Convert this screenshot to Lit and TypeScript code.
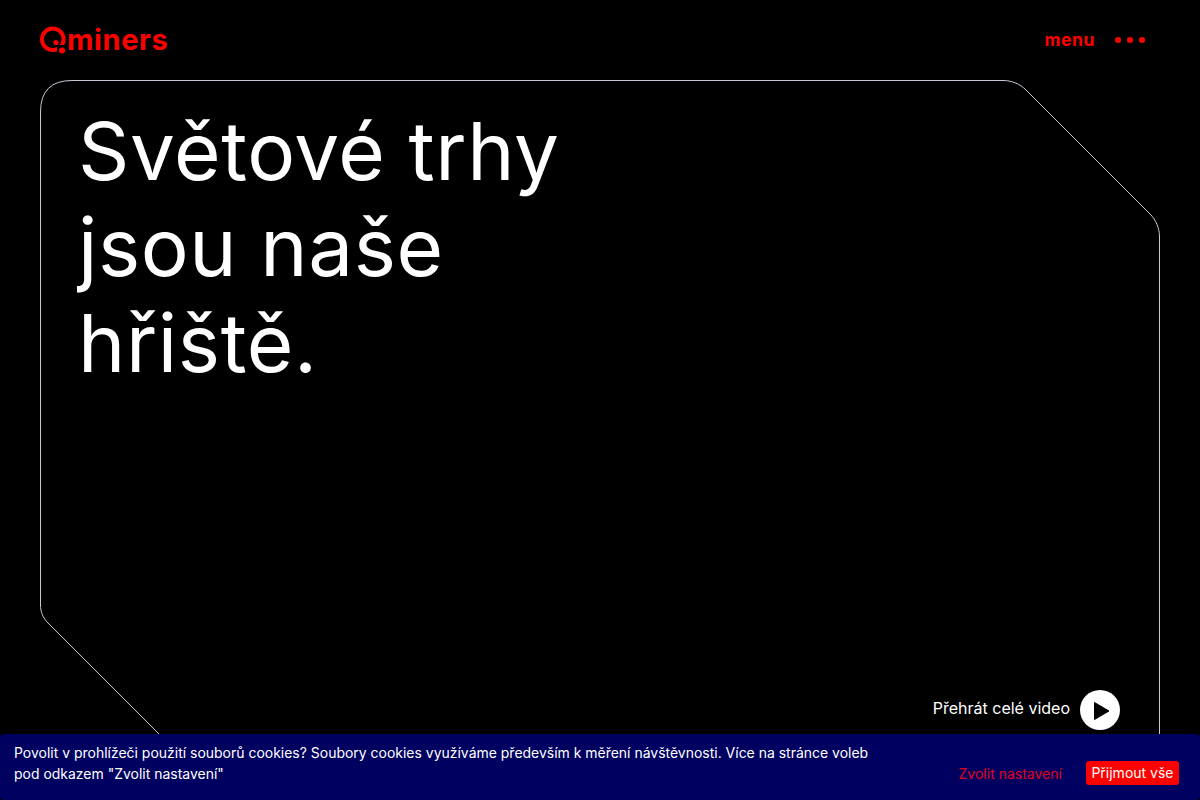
import { LitElement, html, css } from "lit";
import { customElement } from "lit/decorators.js";

@customElement("app-root")
export class AppRoot extends LitElement {
  static styles = css`
    :host { display: block; width: 1200px; height: 800px; background: #000; overflow: hidden; position: relative; font-family: Inter, "Liberation Sans", sans-serif; color: #fff; }
    .top { display: flex; align-items: center; justify-content: space-between; height: 80px; padding: 0 55px 0 40px; box-sizing: border-box; }
    .logo { display: flex; align-items: center; color: #ff0000; font-size: 29px; font-weight: 700; letter-spacing: 0.6px; line-height: 1; }
    .logo svg { display: block; width: 27px; height: 28px; }
    .logo span { padding-bottom: 2px; }
    .menu { display: flex; align-items: center; gap: 20px; color: #ff0000; font-size: 17.500px; font-weight: 700; letter-spacing: 0.6px; }
    .menu span { padding-bottom: 2px; }
    .dots { display: flex; gap: 6px; }
    .dots i { width: 6px; height: 6px; border-radius: 50%; background: #ff0000; }
    .hero { position: relative; margin: 0 40px; height: 720px; box-sizing: border-box; padding: 23px 38px 0; }
    .frame { position: absolute; left: 0; top: 0; width: 1120px; height: 720px; }
    h1 { position: relative; margin: 0; font-size: 80px; line-height: 96px; font-weight: 400; letter-spacing: 0.6px; }
    .play { position: absolute; right: 40px; top: 610px; display: flex; align-items: center; gap: 10px; font-size: 16px; }
    .play span { padding-bottom: 4px; }
    .play svg { width: 40px; height: 40px; display: block; }
    .cookies { position: absolute; left: 0; right: 0; bottom: 0; height: 66px; box-sizing: border-box; background: #000060; border-radius: 4px; display: flex; align-items: flex-end; justify-content: space-between; padding: 8px 21px 15px 14px; font-size: 13.970px; line-height: 21px; }
    .cookies p { margin: 0 0 1px; width: 900px; }
    .actions { display: flex; align-items: center; gap: 24px; font-size: 14px; }
    .set { color: #e0001b; }
    .ok { background: #ff0000; color: #fff; border-radius: 3px; padding: 1px 5.500px 2px; }
  `;
  render() {
    return html`
      <div class="top">
        <div class="logo">
          <svg viewBox="0 0 27 28"><circle cx="12.800" cy="13.300" r="10.800" fill="none" stroke="#f00" stroke-width="4"/><circle cx="16" cy="16.500" r="2.600" fill="#f00"/><rect x="17" y="19" width="10" height="9" fill="#000"/><circle cx="22" cy="24.500" r="3" fill="#f00"/></svg>
          <span>miners</span>
        </div>
        <div class="menu"><span>menu</span><div class="dots"><i></i><i></i><i></i></div></div>
      </div>
      <div class="hero">
        <svg class="frame" viewBox="0 0 1120 720" fill="none"><path d="M.5 525V32Q.5.500 32 .500H963C972 .500 980 4 986 10L1110 134C1116 140 1119.500 148 1119.500 157V720M.5 525C.5 532 3 538 8 543L185 720" stroke="#c9c9d6" stroke-width="1"/></svg>
        <h1>Světové trhy<br>jsou naše<br>hřiště.</h1>
        <div class="play"><span>Přehrát celé video</span><svg viewBox="0 0 40 40"><circle cx="20" cy="20" r="20" fill="#fff"/><path d="M14.500 12.500L29 21 14.500 29.500Z" fill="#000" stroke="#000" stroke-width="1" stroke-linejoin="round"/></svg></div>
      </div>
      <div class="cookies">
        <p>Povolit v prohlížeči použití souborů cookies? Soubory cookies využíváme především k měření návštěvnosti. Více na stránce voleb<br>pod odkazem "Zvolit nastavení"</p>
        <div class="actions"><span class="set">Zvolit nastavení</span><span class="ok">Přijmout vše</span></div>
      </div>
    `;
  }
}
